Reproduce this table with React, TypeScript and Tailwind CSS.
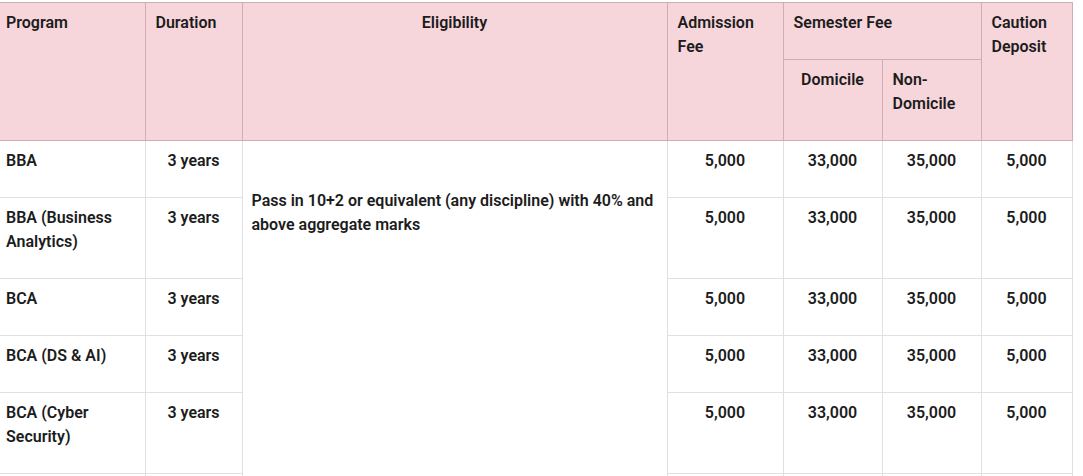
import React from "react";

type Row = {
  program: string;
  duration: string;
  admission: string;
  domicile: string;
  nonDomicile: string;
  caution: string;
};

const rows: Row[] = [
  { program: "BBA", duration: "3 years", admission: "5,000", domicile: "33,000", nonDomicile: "35,000", caution: "5,000" },
  { program: "BBA (Business Analytics)", duration: "3 years", admission: "5,000", domicile: "33,000", nonDomicile: "35,000", caution: "5,000" },
  { program: "BCA", duration: "3 years", admission: "5,000", domicile: "33,000", nonDomicile: "35,000", caution: "5,000" },
  { program: "BCA (DS & AI)", duration: "3 years", admission: "5,000", domicile: "33,000", nonDomicile: "35,000", caution: "5,000" },
  { program: "BCA (Cyber Security)", duration: "3 years", admission: "5,000", domicile: "33,000", nonDomicile: "35,000", caution: "5,000" }
];

const th = "border border-[#d3abb2] px-[10px] pt-[8px] pb-[24px] align-top font-semibold";
const td = "border border-[#dfdfe7] px-[10px] pt-[8px] pb-[24px] align-top";

const App = () => {
  return (
    <div
      className="w-[1083px] h-[476px] overflow-hidden bg-white pt-[2px] text-[16px] leading-[24px] text-[#1c1c1c] font-semibold"
      style={{ fontFamily: "Roboto, 'Liberation Sans', sans-serif" }}
    >
      <table className="w-[1072px] table-fixed border-collapse">
        <colgroup>
          <col className="w-[145px]" />
          <col className="w-[97px]" />
          <col className="w-[425px]" />
          <col className="w-[116px]" />
          <col className="w-[99px]" />
          <col className="w-[99px]" />
          <col className="w-[91px]" />
        </colgroup>
        <thead className="bg-[#f7d6db]">
          <tr>
            <th rowSpan={2} className={`${th} pl-[6px] text-left border-l-0`}>Program</th>
            <th rowSpan={2} className={`${th} text-left`}>Duration</th>
            <th rowSpan={2} className={`${th} text-center`}>Eligibility</th>
            <th rowSpan={2} className={`${th} text-left`}>Admission Fee</th>
            <th colSpan={2} className={`${th} text-left`}>Semester Fee</th>
            <th rowSpan={2} className={`${th} text-left`}>Caution Deposit</th>
          </tr>
          <tr>
            <th className={`${th} text-center`}>Domicile</th>
            <th className={`${th} text-left`}>Non-Domicile</th>
          </tr>
        </thead>
        <tbody>
          {rows.map((row, i) => (
            <tr key={row.program}>
              <td className={`${td} pl-[6px] text-left border-l-0`}>{row.program}</td>
              <td className={`${td} text-center`}>{row.duration}</td>
              {i === 0 && (
                <td rowSpan={rows.length + 1} className={`${td} pl-[9px] pt-[48px] text-left`}>
                  Pass in 10+2 or equivalent (any discipline) with 40% and above aggregate marks
                </td>
              )}
              <td className={`${td} text-center`}>{row.admission}</td>
              <td className={`${td} text-center`}>{row.domicile}</td>
              <td className={`${td} text-center`}>{row.nonDomicile}</td>
              <td className={`${td} text-center`}>{row.caution}</td>
            </tr>
          ))}
          {/* next row runs past the bottom edge */}
          <tr className="h-[57px]">
            <td className={`${td} border-l-0`} />
            <td className={td} />
            <td className={td} />
            <td className={td} />
            <td className={td} />
            <td className={td} />
          </tr>
        </tbody>
      </table>
    </div>
  );
};

export default App;
